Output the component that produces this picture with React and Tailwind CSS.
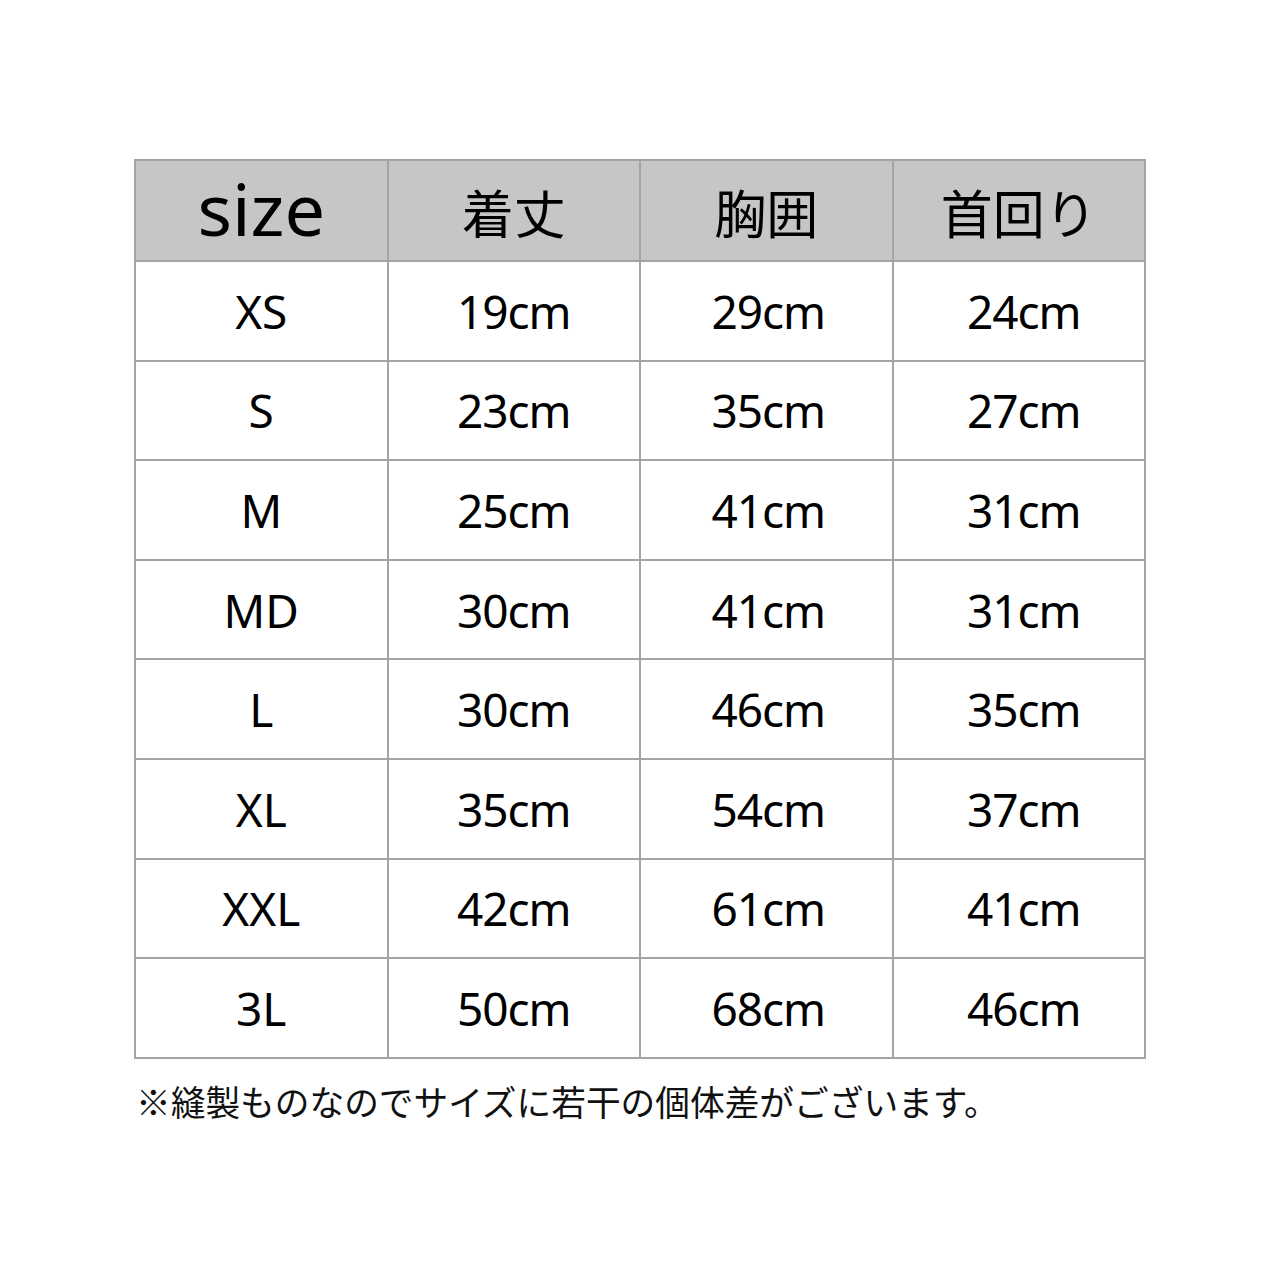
const headers = ['size', '着丈', '胸囲', '首回り'];

const rows = [
  ['XS', '19cm', '29cm', '24cm'],
  ['S', '23cm', '35cm', '27cm'],
  ['M', '25cm', '41cm', '31cm'],
  ['MD', '30cm', '41cm', '31cm'],
  ['L', '30cm', '46cm', '35cm'],
  ['XL', '35cm', '54cm', '37cm'],
  ['XXL', '42cm', '61cm', '41cm'],
  ['3L', '50cm', '68cm', '46cm'],
];

const font = { fontFamily: '"Noto Sans", "Noto Sans CJK JP", sans-serif' };

export default function App() {
  return (
    <div className="w-[1280px] h-[1280px] bg-white text-black" style={font}>
      <div className="pt-[159px] pl-[134px]">
        <div className="w-[1012px] grid grid-cols-4 gap-[2px] p-[2px] bg-[#a4a4a4]">
          {headers.map((h, i) => (
            <div
              key={h}
              className={
                'h-[99px] bg-[#c6c6c6] flex items-center justify-center ' +
                (i === 0 ? 'text-[72px] pb-[6px]' : 'text-[52px] pt-[6px]')
              }
            >
              {h}
            </div>
          ))}
          {rows.map((r) =>
            r.map((c, j) => (
              <div
                key={r[0] + j}
                className={
                  'h-[97.6px] bg-white flex items-center justify-center text-[46px] pt-[1px] ' +
                  (j === 0 ? 'tracking-[0px]' : 'tracking-[-1px] ') +
                  (j === 3 ? ' pl-[10px]' : j === 2 ? ' pl-[4px]' : '')
                }
              >
                {c}
              </div>
            ))
          )}
        </div>
        <p
          className="mt-[20px] pl-[2px] text-[34.7px] leading-[44px] text-[#111]"
          style={{ fontFamily: '"Noto Sans CJK JP", sans-serif' }}
        >
          ※縫製ものなのでサイズに若干の個体差がございます。
        </p>
      </div>
    </div>
  );
}
